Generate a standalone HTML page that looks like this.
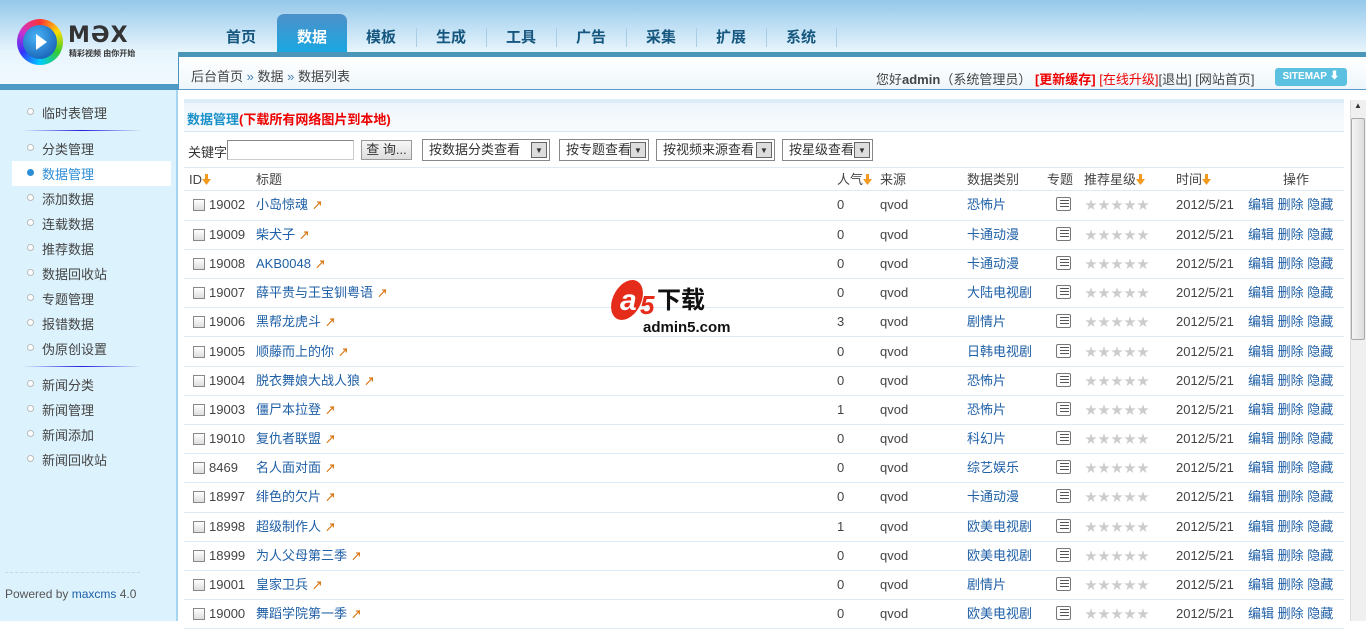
<!DOCTYPE html>
<html><head><meta charset="utf-8">
<style>
*{margin:0;padding:0;box-sizing:border-box}
body{width:1366px;height:621px;overflow:hidden;font-family:"Liberation Sans","Noto Sans CJK SC",sans-serif;font-size:12px;color:#333;background:#fff;position:relative}
.abs{position:absolute}
#hd{left:0;top:0;width:1366px;height:52px;background:linear-gradient(#94c8ea,#e8f5fd)}
#navline{left:178px;top:52px;width:1188px;height:5px;background:#4a96b8}
#leftband{left:0;top:52px;width:178px;height:33px;background:linear-gradient(#e8f5fd,#f2f9fe)}
#leftbar{left:0;top:84px;width:178px;height:6px;background:#4f9ac4}
.tab{position:absolute;top:26px;width:70px;text-align:center;font-size:15px;font-weight:bold;color:#16577f}
.sep{position:absolute;top:28px;width:1px;height:19px;background:#a8cde4}
#act{left:277px;top:14px;width:70px;height:38px;border-radius:7px 7px 0 0;background:linear-gradient(#4d90c9,#1aa7e0);color:#fff;padding-top:12px}
#crumb{left:178px;top:57px;width:1188px;height:33px;background:linear-gradient(#fff,#eef6fb);border-left:1px solid #4a96b8;border-bottom:1px solid #5b9ccb}
#side{left:0;top:90px;width:178px;height:531px;background:#dcf2fd;border-right:2px solid #a6d5f2}
.si{position:absolute;left:42px;font-size:13px;color:#444}
.dot{position:absolute;left:27px;width:7px;height:7px;border-radius:50%;border:1px solid #bbb;background:#fff}
.div{position:absolute;left:22px;width:120px;height:1px;background:linear-gradient(90deg,rgba(60,60,220,0),#2020e0,rgba(60,60,220,0))}
#main{left:180px;top:90px;width:1170px;height:531px;background:#fff}
table{border-collapse:collapse;table-layout:fixed}
td{height:29.2px;line-height:16px;border-bottom:1px solid #dcebf5;font-size:13px;color:#444;white-space:nowrap;padding:0}
a{color:#1e5fa6;text-decoration:none}
.cb{display:inline-block;width:12px;height:12px;border:1px solid #888;background:linear-gradient(#fff,#ddd);vertical-align:-2px;margin-right:4px}
.hot{color:#d8700a;font-size:11px;font-weight:bold;margin-left:4px;line-height:12px}
.ico{display:inline-block;width:15px;height:14px;border:1px solid #777;border-radius:2px;background:repeating-linear-gradient(#fff 0 2px,#555 2px 3px);background-size:9px 100%;background-repeat:repeat-y;background-position:3px 0;background-clip:content-box;padding:2px 0;vertical-align:-2px}
.star{color:#ccc;font-size:12px;letter-spacing:1px;line-height:12px}
.arr{display:inline-block;width:9px;height:11px;vertical-align:-1px}
.h{position:absolute;top:172px;font-size:13px;line-height:16px;color:#444;white-space:nowrap}
.sel{position:absolute;top:139px;height:22px;border:1px solid #888;background:#fff;font-size:13px;padding:2px 6px;color:#333;line-height:16px}
.sel i{position:absolute;right:2px;top:2px;width:16px;height:16px;border:1px solid #666;background:#ddd;font-style:normal;font-size:8px;text-align:center;line-height:15px}
</style></head><body>
<div id="hd" class="abs"></div>
<div id="leftband" class="abs"></div>
<div id="leftbar" class="abs"></div>
<div class="abs" style="left:17px;top:19px;width:46px;height:46px;border-radius:50%;background:conic-gradient(#f33,#fd0,#3c3,#0cf,#33f,#c3c,#f33)"></div>
<div class="abs" style="left:23px;top:25px;width:34px;height:34px;border-radius:50%;background:radial-gradient(circle at 40% 35%,#4ab3f5,#0a4ea8)"></div>
<div class="abs" style="left:36px;top:34px;width:0;height:0;border-left:11px solid #fff;border-top:8px solid transparent;border-bottom:8px solid transparent"></div>
<div class="abs" style="left:68px;top:24px;font-size:22px;font-weight:bold;color:#333;letter-spacing:1px;font-family:'DejaVu Sans',sans-serif;line-height:24px">MƏX</div>
<div class="abs" style="left:69px;top:48px;font-size:8px;color:#333;font-weight:bold">精彩视频 由你开始</div>
<div id="navline" class="abs"></div>
<div class="tab" style="left:206px">首页</div>
<div class="tab" id="act">数据</div>
<div class="tab" style="left:346px">模板</div>
<div class="tab" style="left:416px">生成</div>
<div class="tab" style="left:486px">工具</div>
<div class="tab" style="left:556px">广告</div>
<div class="tab" style="left:626px">采集</div>
<div class="tab" style="left:696px">扩展</div>
<div class="tab" style="left:766px">系统</div>
<div class="sep" style="left:416px"></div><div class="sep" style="left:486px"></div><div class="sep" style="left:556px"></div><div class="sep" style="left:626px"></div><div class="sep" style="left:696px"></div><div class="sep" style="left:766px"></div><div class="sep" style="left:836px"></div>
<div id="crumb" class="abs"><div class="abs" style="left:12px;top:9px;font-size:13px;color:#444">后台首页 <span style="color:#4a7fae">»</span> 数据 <span style="color:#4a7fae">»</span> 数据列表</div>
<div class="abs" style="left:697px;top:12px;font-size:13px;color:#444;white-space:nowrap">您好<b>admin</b>（系统管理员） <b style="color:#e00">[更新缓存]</b> <span style="color:#e00">[在线升级]</span>[退出] [网站首页]</div>
<div class="abs" style="left:1096px;top:11px;width:72px;height:18px;border-radius:3px;background:#5cc1e0;color:#fff;font-size:10px;font-weight:bold;text-align:center;line-height:18px">SITEMAP ⬇</div></div>
<div id="side" class="abs">
<div class="dot" style="top:18px"></div><div class="si" style="top:13px">临时表管理</div>
<div class="div" style="top:40px"></div>
<div class="dot" style="top:54px"></div><div class="si" style="top:49px">分类管理</div>
<div class="abs" style="left:12px;top:71px;width:159px;height:25px;background:#fff"></div>
<div class="dot" style="top:79px;background:#2d8ed6;border-color:#2d8ed6"></div><div class="si" style="top:74px;color:#2d8ed6">数据管理</div>
<div class="dot" style="top:104px"></div><div class="si" style="top:99px">添加数据</div>
<div class="dot" style="top:129px"></div><div class="si" style="top:124px">连载数据</div>
<div class="dot" style="top:154px"></div><div class="si" style="top:149px">推荐数据</div>
<div class="dot" style="top:179px"></div><div class="si" style="top:174px">数据回收站</div>
<div class="dot" style="top:204px"></div><div class="si" style="top:199px">专题管理</div>
<div class="dot" style="top:229px"></div><div class="si" style="top:224px">报错数据</div>
<div class="dot" style="top:254px"></div><div class="si" style="top:249px">伪原创设置</div>
<div class="div" style="top:276px"></div>
<div class="dot" style="top:290px"></div><div class="si" style="top:285px">新闻分类</div>
<div class="dot" style="top:315px"></div><div class="si" style="top:310px">新闻管理</div>
<div class="dot" style="top:340px"></div><div class="si" style="top:335px">新闻添加</div>
<div class="dot" style="top:365px"></div><div class="si" style="top:360px">新闻回收站</div>
<div class="abs" style="left:5px;top:482px;width:135px;border-top:1px dashed #c8d8e2"></div>
<div class="abs" style="left:5px;top:497px;font-size:12px;color:#555">Powered by <span style="color:#1e5fa6">maxcms</span> 4.0</div>
</div>
<div id="main" class="abs">
<div class="abs" style="left:4px;top:9px;width:1160px;height:4px;background:#dcedf8"></div>
<div class="abs" style="left:4px;top:13px;width:1160px;height:29px;background:linear-gradient(#eef6fb,#f8fbfd);border-bottom:1px solid #d6e9f5"></div>
<div class="abs" style="left:7px;top:19px;font-size:13px;font-weight:bold;color:#1a90c8">数据管理<span style="color:#e00">(下载所有网络图片到本地)</span></div>
<div class="abs" style="left:8px;top:52px;font-size:13px">关键字</div>
<div class="abs" style="left:47px;top:50px;width:127px;height:20px;border:1px solid #999;border-color:#888 #ccc #ccc #888"></div>
<div class="abs" style="left:181px;top:50px;width:51px;height:20px;border:1px solid #999;background:linear-gradient(#f6f6f6,#ddd);font-size:13px;text-align:center;line-height:18px">查 询...</div>
<div class="abs" style="left:4px;top:77px;width:1160px;height:1px;background:#dcebf5"></div>
<div class="abs" style="left:4px;top:100px;width:1160px;height:1px;background:#dcebf5"></div>
</div>
<div class="sel" style="left:422px;width:128px">按数据分类查看<i>▼</i></div>
<div class="sel" style="left:559px;width:90px">按专题查看<i>▼</i></div>
<div class="sel" style="left:656px;width:119px">按视频来源查看<i>▼</i></div>
<div class="sel" style="left:782px;width:91px">按星级查看<i>▼</i></div>
<svg width="0" height="0" style="position:absolute"><defs><symbol id="da" viewBox="0 0 9 11"><path d="M3 0h3v5h3L4.5 11 0 5h3z" fill="#f39a1e"/></symbol></defs></svg>
<div class="h" style="left:189px">ID<svg class="arr"><use href="#da"/></svg></div>
<div class="h" style="left:256px">标题</div>
<div class="h" style="left:837px">人气<svg class="arr"><use href="#da"/></svg></div>
<div class="h" style="left:880px">来源</div>
<div class="h" style="left:967px">数据类别</div>
<div class="h" style="left:1047px">专题</div>
<div class="h" style="left:1084px">推荐星级<svg class="arr"><use href="#da"/></svg></div>
<div class="h" style="left:1176px">时间<svg class="arr"><use href="#da"/></svg></div>
<div class="h" style="left:1283px">操作</div>
<table class="abs" style="left:184px;top:191px;width:1160px">
<colgroup><col style="width:72px"><col style="width:581px"><col style="width:43px"><col style="width:87px"><col style="width:86px"><col style="width:32px"><col style="width:91px"><col style="width:72px"><col></colgroup>
<tbody id="rows"></tbody>
</table>
<div class="abs" style="left:612px;top:280px;width:30px;height:40px;border-radius:50%;background:#e52b1a;transform:skewX(-15deg)"></div>
<div class="abs" style="left:620px;top:286px;font-size:30px;font-weight:bold;color:#fff;font-style:italic;line-height:30px">a</div>
<div class="abs" style="left:640px;top:292px;font-size:26px;font-weight:bold;color:#e52b1a;font-style:italic;line-height:26px">5</div>
<div class="abs" style="left:657px;top:288px;font-size:24px;font-weight:bold;color:#111;line-height:26px">下载</div>
<div class="abs" style="left:643px;top:320px;font-size:15px;font-weight:bold;color:#111;line-height:16px">admin5.com</div>
<div class="abs" style="left:1350px;top:100px;width:16px;height:521px;background:#f0f0f0;border-left:1px solid #ddd"></div>
<div class="abs" style="left:1351px;top:118px;width:14px;height:222px;background:linear-gradient(90deg,#f4f4f4,#ddd);border:1px solid #aaa;border-radius:2px"></div>
<div class="abs" style="left:1354px;top:101px;font-size:8px;color:#333">▲</div>
<script>
var d=[["19002","小岛惊魂",0,"恐怖片"],["19009","柴犬子",0,"卡通动漫"],["19008","AKB0048",0,"卡通动漫"],["19007","薛平贵与王宝钏粤语",0,"大陆电视剧"],["19006","黑帮龙虎斗",3,"剧情片"],["19005","顺藤而上的你",0,"日韩电视剧"],["19004","脱衣舞娘大战人狼",0,"恐怖片"],["19003","僵尸本拉登",1,"恐怖片"],["19010","复仇者联盟",0,"科幻片"],["8469","名人面对面",0,"综艺娱乐"],["18997","绯色的欠片",0,"卡通动漫"],["18998","超级制作人",1,"欧美电视剧"],["18999","为人父母第三季",0,"欧美电视剧"],["19001","皇家卫兵",0,"剧情片"],["19000","舞蹈学院第一季",0,"欧美电视剧"]];
var h="";d.forEach(function(r){h+='<tr><td style="padding-left:9px"><span class="cb"></span>'+r[0]+'</td><td><a>'+r[1]+'</a><span class="hot">↗</span></td><td>'+r[2]+'</td><td>qvod</td><td><a>'+r[3]+'</a></td><td style="padding-left:3px"><span class="ico"></span></td><td><span class="star">★★★★★</span></td><td>2012/5/21</td><td style="padding-left:0"><a>编辑</a> <a>删除</a> <a>隐藏</a></td></tr>'});
document.getElementById("rows").innerHTML=h;
</script>
</body></html>
